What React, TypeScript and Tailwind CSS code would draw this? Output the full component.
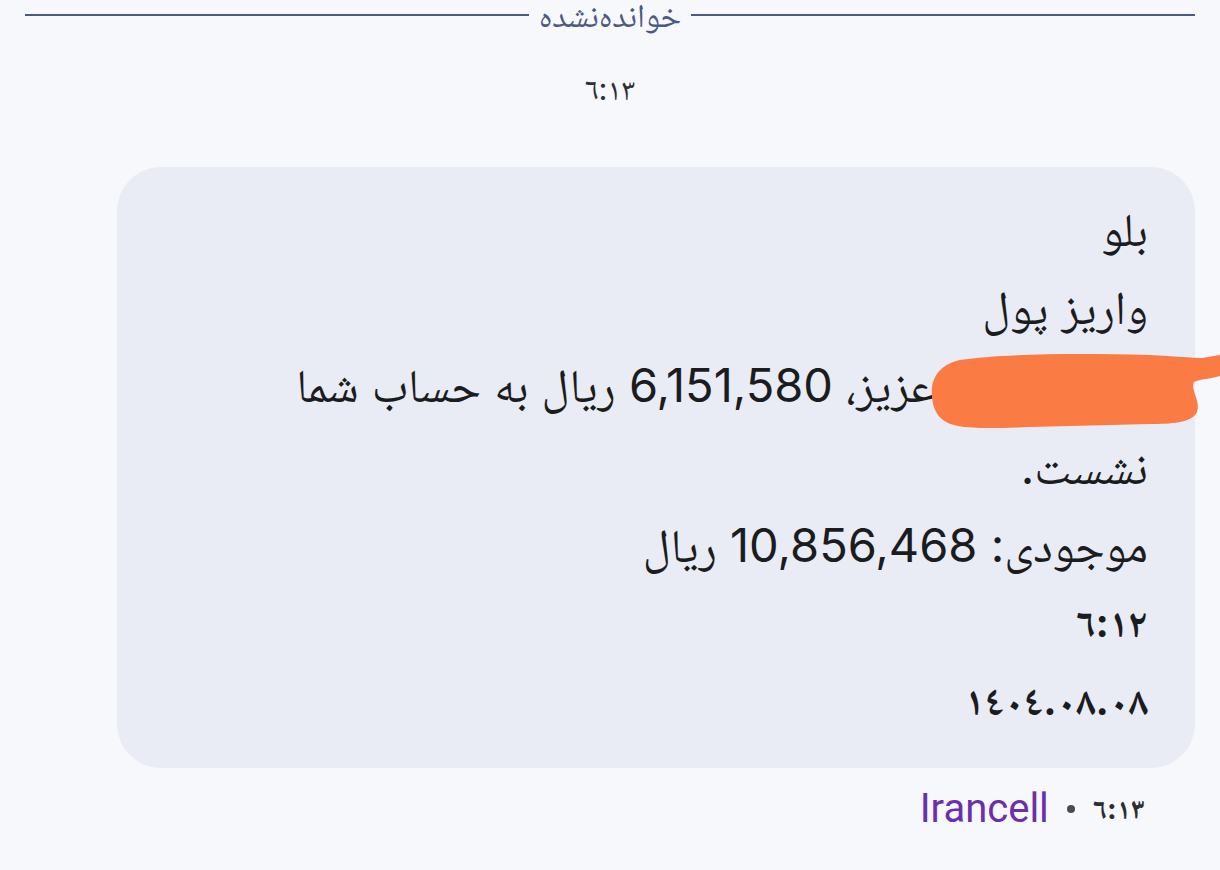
import React from "react";

const fontStack = "font-['Inter','Noto_Naskh_Arabic','Noto_Sans_Arabic','DejaVu_Sans',sans-serif]";

// orange scribble that hides the recipient name
function Redaction() {
  return (
    <svg
      className="pointer-events-none absolute left-[-14px] top-[-4px]"
      width="300"
      height="84"
      viewBox="0 0 300 84"
    >
      <path
        d="M12 50 C10 30 22 18 40 14 C80 8 150 7 230 9 C255 10 272 12 282 12 L300 9 L300 30 C290 33 280 33 274 36 C270 44 281 55 277 66 C272 77 250 78 230 78 C190 79 150 80 110 81 C80 82 55 83 38 80 C22 77 13 68 12 50 Z"
        fill="#fb7b45"
      />
    </svg>
  );
}

export default function App() {
  const line = "leading-[78px] text-[47px] text-[#1b1c20]";

  return (
    <div dir="rtl" className={`min-h-[870px] w-[1220px] overflow-hidden bg-[#f7f8fc] ${fontStack}`}>
      {/* unread divider */}
      <div className="flex h-[31px] items-start gap-[10px] px-[25px]">
        <div className="mt-[14px] h-[2px] flex-1 bg-[#4b5a84]" />
        <span className="text-[33px] leading-[31px] text-[#4b5a84]">خوانده‌نشده</span>
        <div className="mt-[14px] h-[2px] flex-1 bg-[#4b5a84]" />
      </div>

      <div className="mt-[43px] text-center text-[31px] leading-[30px] text-[#2c2d33]">٦:١٣</div>

      {/* message bubble */}
      <div className="mr-[25px] ml-[117px] mt-[63px] rounded-[44px] bg-[#e9ecf5] pr-[47px] pt-[23px] pb-[28px]">
        <div className={line}>بلو</div>
        <div className={line}>واریز پول</div>
        <div className={line}>
          <span className="relative inline-block w-[214px] align-middle">
            <span className="invisible">نام</span>
            <Redaction />
          </span>
          عزیز، 6,151,580 ریال به حساب شما
        </div>
        <div className={line}>نشست.</div>
        <div className={line}>موجودی: 10,856,468 ریال</div>
        <div className="text-[40px] font-bold leading-[78px] text-[#1b1c20]">٦:١٢</div>
        <div className="text-[40px] font-bold leading-[78px] text-[#1b1c20]">١٤٠٤.٠٨.٠٨</div>
      </div>

      {/* footer */}
      <div className="mr-[75px] mt-[17px] flex items-center gap-[18px]">
        <span className="text-[29px] font-bold text-[#2c2d33]">٦:١٣</span>
        <span className="h-[8px] w-[8px] rounded-full bg-[#4a4c53]" />
        <span className="font-['Roboto',sans-serif] text-[40px] leading-[48px] text-[#6b2fae]">Irancell</span>
      </div>
    </div>
  );
}
